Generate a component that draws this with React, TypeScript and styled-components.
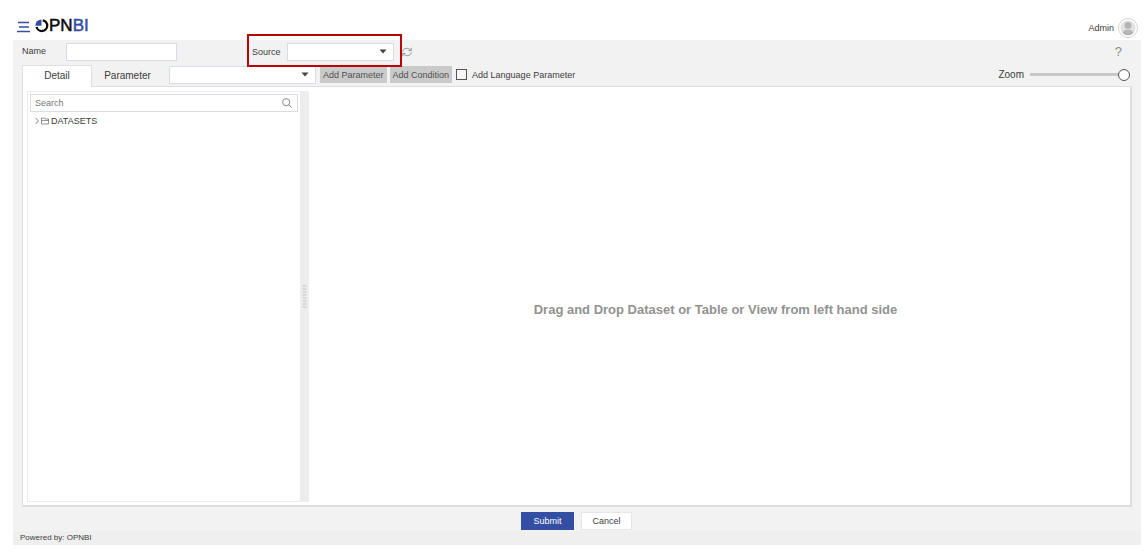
import React from "react";
import styled, { createGlobalStyle } from "styled-components";

const Global = createGlobalStyle`
  * { box-sizing: border-box; }
  html, body, #root { height: 100%; }
  body { margin: 0; background: #fff; color: #3c3c3c; font: 9px/12px "Liberation Sans", Arial, sans-serif; }
  button, input, select { font: inherit; color: inherit; }
`;

const Page = styled.div`
  min-height: 100%;
  display: flex;
  flex-direction: column;
  padding: 0 3px 7px 13px;
`;
const Header = styled.header`
  height: 40px;
  display: flex;
  align-items: flex-end;
  justify-content: space-between;
  padding: 0 3px 2px 4px;
`;
const Brand = styled.div`
  display: flex;
  align-items: center;
  gap: 5px;
  padding-bottom: 2px;
`;
const IconButton = styled.button`
  display: flex;
  padding: 0;
  border: 0;
  background: none;
  color: #8a8a8a;
`;
const Logo = styled.a`
  display: flex;
  align-items: center;
  font-size: 17px;
  line-height: 20px;
  color: #0a0a0a;
  text-decoration: none;
  -webkit-text-stroke: 0.5px;
`;
const Blue = styled.span`
  color: #344ea3;
`;
const Account = styled.div`
  display: flex;
  align-items: center;
  gap: 4px;
`;
const Body = styled.main`
  flex: 1;
  display: flex;
  flex-direction: column;
  padding: 0 9px;
  background: #f2f2f2;
`;
const TopRow = styled.div`
  display: flex;
  align-items: center;
  height: 24px;
`;
const NameLabel = styled.label`
  width: 44px;
  padding-bottom: 2px;
`;
const TextInput = styled.input`
  width: 111px;
  height: 18px;
  padding: 0 4px;
  border: 1px solid #d8dce9;
  background: #fff;
  outline: 0;
`;
const Highlight = styled.div`
  display: flex;
  align-items: center;
  gap: 6px;
  height: 33px;
  margin: -6px 0 -3px 70px;
  padding: 2px 6px 0 3px;
  border: 2px solid #b90504;
  position: relative;
  z-index: 2;
`;
const SelectBox = styled.div<{ $width: number }>`
  display: grid;
  align-items: center;
  width: ${(p) => p.$width}px;
  > * { grid-area: 1 / 1; }
  > svg { justify-self: end; margin-right: 7px; pointer-events: none; }
`;
const Select = styled.select`
  appearance: none;
  width: 100%;
  height: 18px;
  padding: 0 4px;
  border: 1px solid #d8dce9;
  border-radius: 0;
  background: #fff;
`;
const Help = styled(IconButton)`
  margin-left: auto;
  margin-right: 10px;
  font-size: 13px;
  line-height: 16px;
`;
const ToolRow = styled.div`
  display: flex;
  align-items: center;
  height: 22px;
  padding: 0 2px 1px 0;
`;
const Tab = styled.button<{ $active?: boolean }>`
  height: 22px;
  width: ${(p) => (p.$active ? 70 : 71)}px;
  padding: 0;
  border: ${(p) => (p.$active ? "1px solid #dedede" : "0")};
  border-bottom: 0;
  background: ${(p) => (p.$active ? "#fff" : "transparent")};
  font-size: 10px;
  position: relative;
  z-index: 1;
`;
const Tabs = styled.div`
  display: flex;
  margin: 0 6px -2px 0;
`;
const GreyButton = styled.button`
  height: 17px;
  margin-left: 4px;
  padding: 0 3px;
  border: 0;
  background: #cacaca;
  color: #505050;
  white-space: nowrap;
  & + & { margin-left: 3px; }
`;
const Check = styled.label`
  display: flex;
  align-items: center;
  gap: 5px;
  margin-left: 4px;
  white-space: nowrap;
  input { appearance: none; width: 11px; height: 11px; margin: 0; border: 1px solid #555; background: #f8f8f8; }
`;
const ZoomLabel = styled.label`
  display: flex;
  align-items: center;
  gap: 6px;
  margin-left: auto;
  font-size: 10px;
`;
const Slider = styled.input`
  appearance: none;
  width: 100px;
  height: 12px;
  margin: 0;
  background: linear-gradient(#c8c8c8, #c8c8c8) center / 100% 3px no-repeat;
  &::-webkit-slider-thumb {
    appearance: none;
    width: 12px;
    height: 12px;
    border: 1px solid #555;
    border-radius: 50%;
    background: #fff;
  }
`;
const Workspace = styled.section`
  flex: 1;
  display: flex;
  padding: 4px 0 3px 4px;
  border: 1px solid #dedede;
  border-width: 1px 2px 2px 1px;
  background: #fff;
`;
const Sidebar = styled.aside`
  width: 273px;
  padding: 2px;
  border: 1px solid #ececec;
  border-right: 0;
`;
const SearchBox = styled.div`
  display: flex;
  align-items: center;
  height: 18px;
  padding: 0 5px 0 4px;
  border: 1px solid #d8dce9;
  color: #888;
`;
const SearchInput = styled.input`
  flex: 1;
  min-width: 0;
  padding: 0;
  border: 0;
  outline: 0;
  &::placeholder { color: #777; opacity: 1; }
`;
const TreeItem = styled.button`
  display: flex;
  align-items: center;
  gap: 2px;
  height: 18px;
  padding: 0 0 0 5px;
  border: 0;
  background: none;
`;
const Splitter = styled.div`
  width: 9px;
  display: flex;
  align-items: center;
  justify-content: center;
  background: #ededed;
  color: #d8d8d8;
`;
const Canvas = styled.div`
  flex: 1;
  display: flex;
  align-items: center;
  justify-content: center;
  padding: 26px 8px 0 0;
  color: #929292;
  font-size: 13px;
  line-height: 16px;
  font-weight: bold;
`;
const Actions = styled.div`
  display: flex;
  justify-content: center;
  gap: 7px;
  height: 24px;
  padding: 5px 1px 0 0;
`;
const ActionButton = styled.button<{ $primary?: boolean }>`
  height: 18px;
  width: ${(p) => (p.$primary ? 53 : 51)}px;
  padding: 0;
  border: 1px solid ${(p) => (p.$primary ? "#344ea3" : "#e6e6e6")};
  background: ${(p) => (p.$primary ? "#344ea3" : "#fff")};
  color: ${(p) => (p.$primary ? "#fff" : "#3c3c3c")};
`;
const Footer = styled.footer`
  height: 14px;
  padding-left: 7px;
  background: #efefef;
  font-size: 8px;
  line-height: 14px;
`;

const Arrow = () => (
  <svg width="8" height="5" viewBox="0 0 8 5"><path d="M.5.5h7L4 4.5z" fill="#444" /></svg>
);

function Dropdown({ id, label, width }: { id: string; label?: string; width: number }) {
  return (
    <SelectBox $width={width}>
      <Select id={id} aria-label={label}><option value="" /></Select>
      <Arrow />
    </SelectBox>
  );
}

export default function App() {
  return (
    <Page>
      <Global />
      <Header>
        <Brand>
          <IconButton aria-label="Menu">
            <svg width="13" height="14" viewBox="0 0 13 14" stroke="#344ea3" strokeWidth="1.6">
              <path d="M1 3.500h11M2 8h10M0 12.500h13" />
            </svg>
          </IconButton>
          <Logo href="#" aria-label="OPNBI">
            <svg width="14" height="14" viewBox="0 0 14 14">
              <path d="M7.8 1.300A5.400 5.400 0 1 1 1.600 8" fill="none" stroke="#0a0a0a" strokeWidth="2.300" />
              <path d="M6.500 6.700H.3A6.200 6.200 0 0 1 6.500.5z" fill="#344ea3" />
            </svg>
            <span>PN<Blue>BI</Blue></span>
          </Logo>
        </Brand>
        <Account>
          Admin
          <svg width="20" height="20" viewBox="0 0 20 20">
            <circle cx="10" cy="10" r="9.500" fill="#fff" stroke="#d4d4d4" />
            <circle cx="10" cy="10" r="7.500" fill="#e2e2e2" />
            <circle cx="10" cy="7.500" r="3.400" fill="#b5b5b5" />
            <path d="M4.800 15c0-4.500 10.400-4.500 10.400 0-2 3-8.400 3-10.400 0z" fill="#b5b5b5" />
          </svg>
        </Account>
      </Header>
      <Body>
        <TopRow>
          <NameLabel htmlFor="name">Name</NameLabel>
          <TextInput id="name" />
          <Highlight>
            <label htmlFor="source">Source</label>
            <Dropdown id="source" width={107} />
          </Highlight>
          <IconButton aria-label="Refresh">
            <svg width="10" height="10" viewBox="0 0 10 10" fill="none" stroke="currentColor" strokeWidth=".9">
              <path d="M.8 4.800C.8 1 6.500 0 8.700 3.200M9.300.8v2.700H6.500M9.200 5.200C9.200 9 3.500 10 1.300 6.800M.7 9.200V6.500h2.800" />
            </svg>
          </IconButton>
          <Help aria-label="Help">?</Help>
        </TopRow>
        <ToolRow>
          <Tabs>
            <Tab $active>Detail</Tab>
            <Tab>Parameter</Tab>
          </Tabs>
          <Dropdown id="parameter" label="Parameter" width={147} />
          <GreyButton>Add Parameter</GreyButton>
          <GreyButton>Add Condition</GreyButton>
          <Check><input type="checkbox" />Add Language Parameter</Check>
          <ZoomLabel>Zoom<Slider type="range" min="0" max="100" defaultValue="100" /></ZoomLabel>
        </ToolRow>
        <Workspace>
          <Sidebar>
            <SearchBox>
              <SearchInput placeholder="Search" aria-label="Search" />
              <svg width="10" height="10" viewBox="0 0 10 10" fill="none" stroke="currentColor">
                <circle cx="4.200" cy="4.200" r="3.600" /><path d="m7 7 2.700 2.700" />
              </svg>
            </SearchBox>
            <TreeItem>
              <svg width="4" height="8" viewBox="0 0 4 8" fill="none" stroke="#666" strokeWidth=".8"><path d="m.5 1 3 3-3 3" /></svg>
              <svg width="8" height="8" viewBox="0 0 8 8" fill="none" stroke="#666" strokeWidth=".7"><path d="M.5 7V1h2.700l.8 1h3.500v5zM.5 3.500h7" /></svg>
              DATASETS
            </TreeItem>
          </Sidebar>
          <Splitter role="separator" aria-orientation="vertical">
            <svg width="5" height="24" viewBox="0 0 5 24" stroke="currentColor" strokeWidth="4" strokeDasharray="2 1">
              <path d="M2.500 0v24" />
            </svg>
          </Splitter>
          <Canvas>Drag and Drop Dataset or Table or View from left hand side</Canvas>
        </Workspace>
        <Actions>
          <ActionButton $primary>Submit</ActionButton>
          <ActionButton>Cancel</ActionButton>
        </Actions>
      </Body>
      <Footer>Powered by: OPNBI</Footer>
    </Page>
  );
}
